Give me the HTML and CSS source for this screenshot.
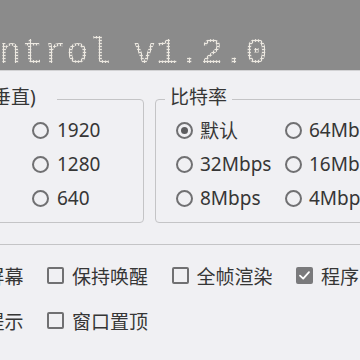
FILE: index.html
```html
<!DOCTYPE html>
<html lang="zh-CN">
<head>
<meta charset="utf-8">
<title>Control v1.2.0</title>
<link rel="stylesheet" href="styles.css">
</head>
<body>
<div class="app">
  <header class="banner">
    <h1 class="title">ntrol v1.2.0</h1>
  </header>
  <main class="content">
    <div class="groups">
      <fieldset class="group group-res">
        <legend class="legend legend-res">垂直)</legend>
        <div class="radios radios-res">
          <label class="radio"><span class="ring"></span><span>1920</span></label>
          <label class="radio"><span class="ring"></span><span>1280</span></label>
          <label class="radio"><span class="ring"></span><span>640</span></label>
        </div>
      </fieldset>
      <fieldset class="group group-rate">
        <legend class="legend legend-rate">比特率</legend>
        <div class="radios radios-rate">
          <label class="radio"><span class="ring ring-on"></span><span>默认</span></label>
          <label class="radio"><span class="ring"></span><span>64Mbps</span></label>
          <label class="radio"><span class="ring"></span><span>32Mbps</span></label>
          <label class="radio"><span class="ring"></span><span>16Mbps</span></label>
          <label class="radio"><span class="ring"></span><span>8Mbps</span></label>
          <label class="radio"><span class="ring"></span><span>4Mbps</span></label>
        </div>
      </fieldset>
    </div>
    <section class="options">
      <label class="check"><span class="box"></span><span>关闭屏幕</span></label>
      <label class="check"><span class="box"></span><span>保持唤醒</span></label>
      <label class="check"><span class="box"></span><span>全帧渲染</span></label>
      <label class="check"><span class="box box-on"><svg viewBox="0 0 17 17" width="17" height="17"><path d="M4 8.6 L7.2 11.6 L13 5.2" fill="none" stroke="#ffffff" stroke-width="1.8" stroke-linecap="round" stroke-linejoin="round"/></svg></span><span>程序常驻</span></label>
      <label class="check"><span class="box"></span><span>触摸提示</span></label>
      <label class="check"><span class="box"></span><span>窗口置顶</span></label>
    </section>
  </main>
</div>
</body>
</html>
```
FILE: styles.css
```css
* { box-sizing: border-box; }
html, body {
  margin: 0;
  padding: 0;
}
body {
  width: 360px;
  height: 360px;
  overflow: hidden;
  background: #f0f0f3;
  font-family: "Noto Sans", "Noto Sans CJK SC", sans-serif;
  font-size: 19px;
  color: #363636;
}
.app {
  width: 360px;
  height: 360px;
  overflow: hidden;
}
.banner {
  height: 71px;
  background: #8b8b8b;
  border-bottom: 1px solid #d2d2d4;
  overflow: hidden;
}
.title {
  margin: 0 0 0 -1px;
  padding-top: 35px;
  font: 400 37.3px/37px "Liberation Mono", monospace;
  white-space: pre;
  color: transparent;
  background-image: radial-gradient(circle at center, #ece8e0 0 1.1px, transparent 1.5px);
  background-size: 3px 3px;
  -webkit-background-clip: text;
  background-clip: text;
}
.content {
  display: flex;
  flex-direction: column;
}
.groups {
  display: flex;
  gap: 11px;
  margin-left: -160px;
  margin-top: 15px;
}
.group {
  margin: 0;
  padding: 0 0 7px 0;
  min-width: 0;
  border: 1px solid #c4c4c6;
  border-radius: 4px;
  flex-shrink: 0;
}
.group-res { width: 304px; }
.group-rate { width: 260px; }
.legend {
  line-height: 22px;
  font-size: 19px;
  white-space: nowrap;
  padding-bottom: 4px;
}
.legend-res {
  margin-left: 151px;
  padding-left: 0;
  padding-right: 21px;
}
.legend-rate {
  margin-left: 9px;
  padding-left: 5px;
  padding-right: 5px;
}
.radios {
  display: grid;
  grid-auto-rows: 34px;
  padding-top: 1px;
}
.radios-res {
  grid-template-columns: 120px;
  padding-left: 191px;
}
.radios-rate {
  grid-template-columns: 109px 109px;
  padding-left: 20px;
}
.radio {
  display: flex;
  align-items: center;
  gap: 7px;
  white-space: nowrap;
}
.radios-res .radio { gap: 8px; }
.ring {
  width: 17px;
  height: 17px;
  border: 2px solid #707072;
  border-radius: 50%;
  flex-shrink: 0;
  display: flex;
  align-items: center;
  justify-content: center;
}
.ring-on::after {
  content: "";
  width: 7px;
  height: 7px;
  border-radius: 50%;
  background: #5c5c5e;
}
.options {
  margin-top: 21px;
  margin-left: -100px;
  width: 600px;
  border-top: 1px solid #c4c4c6;
  padding: 8px 0 0 22.5px;
  display: grid;
  grid-template-columns: repeat(4, 124.5px);
  grid-auto-rows: 45px;
}
.check {
  display: flex;
  align-items: center;
  gap: 8px;
  white-space: nowrap;
}
.box {
  width: 17px;
  height: 17px;
  border: 2px solid #707072;
  border-radius: 2px;
  flex-shrink: 0;
  display: flex;
  align-items: center;
  justify-content: center;
}
.box-on {
  background: #7a7a7c;
  border-color: #7a7a7c;
}
.box-on svg { display: block; flex-shrink: 0; }
```
